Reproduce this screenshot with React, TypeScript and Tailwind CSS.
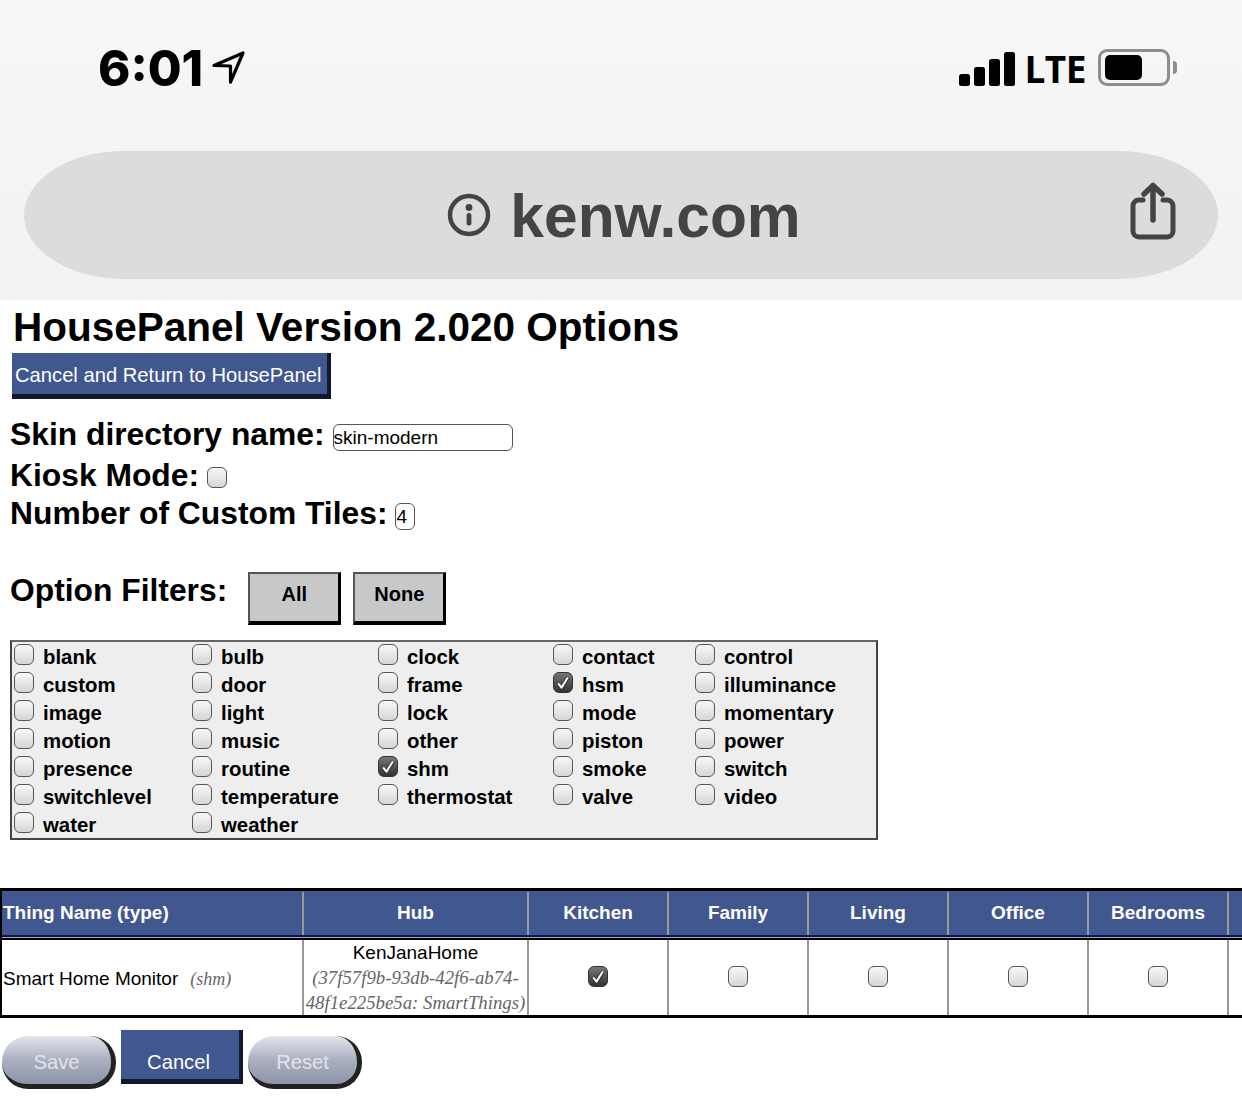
import React from "react";

const sans = "font-['Liberation_Sans',Arial,sans-serif]";

function Box({ checked = false }: { checked?: boolean }) {
  if (checked) {
    return (
      <span className="relative flex h-[21px] w-[20px] shrink-0 items-center justify-center rounded-[6px] border border-[#333] bg-gradient-to-b from-[#777] to-[#333]">
        <svg width="16" height="16" viewBox="0 0 16 16" fill="none">
          <path d="M3 8.5 6.5 13 13 2.5" stroke="#333" strokeWidth="4" strokeLinejoin="round" />
          <path d="M3.2 8.5 6.5 12.6 12.8 2.5" stroke="#fff" strokeWidth="2" strokeLinejoin="round" />
        </svg>
      </span>
    );
  }
  return <span className="block h-[21px] w-[20px] shrink-0 rounded-[6px] border border-[#555] bg-gradient-to-b from-[#f8f8f8] to-[#d6d6d6]" />;
}

const filterCols: { x: string; items: [string, boolean?][] }[] = [
  { x: "w-[178px]", items: [["blank"], ["custom"], ["image"], ["motion"], ["presence"], ["switchlevel"], ["water"]] },
  { x: "w-[186px]", items: [["bulb"], ["door"], ["light"], ["music"], ["routine"], ["temperature"], ["weather"]] },
  { x: "w-[175px]", items: [["clock"], ["frame"], ["lock"], ["other"], ["shm", true], ["thermostat"]] },
  { x: "w-[142px]", items: [["contact"], ["hsm", true], ["mode"], ["piston"], ["smoke"], ["valve"]] },
  { x: "w-[170px]", items: [["control"], ["illuminance"], ["momentary"], ["power"], ["switch"], ["video"]] },
];

const roomCols = [
  { name: "Kitchen", w: "w-[140px]", checked: true },
  { name: "Family", w: "w-[140px]" },
  { name: "Living", w: "w-[140px]" },
  { name: "Office", w: "w-[140px]" },
  { name: "Bedrooms", w: "w-[140px]" },
];

function StatusBar() {
  return (
    <div className="flex h-[151px] items-start justify-between pl-[98px] pr-[65px] pt-[41px]">
      <div className="flex items-center">
        <span className="font-['Inter',sans-serif] text-[49px] font-extrabold leading-[56px] text-black">6:01</span>
        <svg className="ml-[8px] mt-[-3px]" width="36" height="36" viewBox="0 0 36 36" fill="none">
          <path d="M3 15.5 32 3 19.5 32V16Z" stroke="#000" strokeWidth="3.2" strokeLinejoin="round" />
        </svg>
      </div>
      <div className="flex items-center pt-[7px]">
        <svg width="56" height="36" viewBox="0 0 56 36" fill="#000">
          <rect x="0" y="23" width="11" height="12" rx="2.5" />
          <rect x="15" y="16" width="11" height="19" rx="2.5" />
          <rect x="30" y="8" width="11" height="27" rx="2.5" />
          <rect x="45" y="1" width="11" height="34" rx="2.5" />
        </svg>
        <span className="ml-[9px] mt-[1px] font-['Open_Sans',sans-serif] text-[37px] font-bold leading-[40px] tracking-[-0.5px] text-black">LTE</span>
        <span className="ml-[12px] mt-[-3px] flex h-[37px] w-[72px] items-center rounded-[9px] border-[3px] border-[#8e8e8e] pl-[4px]">
          <span className="block h-[25px] w-[37px] rounded-[5px] bg-black" />
        </span>
        <span className="ml-[3px] mt-[-3px] block h-[13px] w-[4px] rounded-r-[4px] bg-[#8e8e8e]" />
      </div>
    </div>
  );
}

function UrlPill() {
  return (
    <div className="relative mx-[24px] flex h-[128px] items-center justify-center rounded-[100px/64px] bg-[#dcdcdc] pl-[6px]">
      <svg className="mr-[19px] mt-[-1px]" width="44" height="44" viewBox="0 0 44 44" fill="none">
        <circle cx="22" cy="22" r="19" stroke="#444" strokeWidth="4.5" />
        <circle cx="22" cy="14.5" r="3.4" fill="#444" />
        <rect x="19.6" y="20" width="4.8" height="12.5" rx="2.2" fill="#444" />
      </svg>
      <span className={`${sans} mt-[2px] text-[60.5px] font-bold leading-[72px] text-[#444]`}>kenw.com</span>
      <svg className="absolute right-[42px] top-[31px]" width="46" height="58" viewBox="0 0 46 58" fill="none">
        <path d="M13 18H9a6 6 0 0 0-6 6v25a6 6 0 0 0 6 6h28a6 6 0 0 0 6-6V24a6 6 0 0 0-6-6h-4" stroke="#444" strokeWidth="5" strokeLinecap="round" />
        <path d="M23 38V4" stroke="#444" strokeWidth="5.5" strokeLinecap="round" />
        <path d="M14 12 23 3.5 32 12" stroke="#444" strokeWidth="5.5" strokeLinecap="round" strokeLinejoin="round" />
      </svg>
    </div>
  );
}

function PillButton({ label }: { label: string }) {
  return (
    <span className="flex h-[53px] w-[114px] items-center justify-center rounded-[26px] border-b-[5px] border-r-[5px] border-[#222] bg-gradient-to-b from-[#e4e6ec] via-[#aab0c0] to-[#8d94a8] pt-[4px] text-[20.2px] leading-none text-[#e2e4ea]">
      {label}
    </span>
  );
}

export default function App() {
  return (
    <div className={`${sans} h-[1110px] w-[1242px] overflow-hidden bg-white text-black`}>
      <div className="h-[300px] bg-gradient-to-b from-[#f7f7f7] to-[#f2f2f2]">
        <StatusBar />
        <UrlPill />
      </div>

      <h1 className="ml-[13px] whitespace-nowrap text-[40.5px] font-bold leading-[54px]">HousePanel Version 2.020 Options</h1>

      <div className="ml-[12px] mt-[-1px] flex h-[46px] w-[319px] items-center whitespace-nowrap border-b-[5px] border-r-[4px] border-[#14182c] bg-[#41578f] pl-[3px] pt-[4px] text-[20.2px] text-white">
        Cancel and Return to HousePanel
      </div>

      <div className="ml-[10px] mt-[15px] flex h-[40px] items-center">
        <span className="text-[31.8px] font-bold leading-[40px]">Skin directory name:</span>
        <span className="ml-[8px] mt-[6px] flex h-[27px] w-[180px] items-center rounded-[6px] border border-[#555] pt-[3px] text-[19px]">skin-modern</span>
      </div>
      <div className="ml-[10px] flex h-[42px] items-center">
        <span className="text-[31.8px] font-bold leading-[40px]">Kiosk Mode:</span>
        <span className="ml-[8px] mt-[4px]"><Box /></span>
      </div>
      <div className="ml-[10px] flex h-[36px] items-center">
        <span className="mt-[-2px] text-[31.8px] font-bold leading-[36px]">Number of Custom Tiles:</span>
        <span className="ml-[8px] mt-[4px] flex h-[27px] w-[20px] items-center rounded-[6px] border border-[#555] pt-[2px] text-[19px]">4</span>
      </div>

      <div className="ml-[10px] mt-[40px] flex h-[53px] items-start">
        <span className="mt-[-2px] text-[31.8px] font-bold leading-[40px]">Option Filters:</span>
        <span className="ml-[21px] flex h-[53px] w-[93px] items-center justify-center border-2 border-b-[4px] border-r-[3px] border-[#555] border-b-black border-r-black bg-[#c8c8c8] pb-[8px] text-[20px] font-bold">All</span>
        <span className="ml-[12px] flex h-[53px] w-[93px] items-center justify-center border-2 border-b-[4px] border-r-[3px] border-[#555] border-b-black border-r-black bg-[#c8c8c8] pb-[8px] text-[20px] font-bold">None</span>
      </div>

      <div className="ml-[10px] mt-[15px] flex h-[200px] w-[868px] border-2 border-[#444] border-t-[#666] bg-[#eeeeee] pl-[2px] pt-[2px]">
        {filterCols.map((col) => (
          <div key={col.items[0][0]} className={`${col.x} flex flex-col`}>
            {col.items.map(([label, checked]) => (
              <div key={label} className="flex h-[28px] shrink-0 items-start">
                <Box checked={checked} />
                <span className="ml-[9px] text-[20.4px] font-bold leading-[26px]">{label}</span>
              </div>
            ))}
          </div>
        ))}
      </div>

      <div className="mt-[48px] border-b-[3px] border-l-2 border-t-[3px] border-black">
        <div className="flex h-[46px] border-b-[2px] border-[#0a1560] bg-[#41578f] pt-[1px] text-[19px] font-bold text-white">
          <div className="flex w-[302px] shrink-0 items-center border-r-2 border-[#999] pl-[1px]">Thing Name (type)</div>
          <div className="flex w-[225px] shrink-0 items-center justify-center border-r-2 border-[#999]">Hub</div>
          {roomCols.map((c) => (
            <div key={c.name} className={`${c.w} flex shrink-0 items-center justify-center border-r-2 border-[#999]`}>{c.name}</div>
          ))}
        </div>
        <div className="h-[3px] border-b-[2px] border-black bg-[#aaa]" />
        <div className="flex h-[75px]">
          <div className="flex w-[302px] shrink-0 items-center border-r-2 border-[#999] pl-[1px] pt-[3px] text-[19px]">
            Smart Home Monitor
            <span className="ml-[12px] font-['Liberation_Serif',serif] text-[18px] italic text-[#666]">(shm)</span>
          </div>
          <div className="flex w-[225px] shrink-0 flex-col items-center justify-center border-r-2 border-[#999] text-center">
            <span className="text-[19px] leading-[25px]">KenJanaHome</span>
            <span className="whitespace-nowrap font-['Liberation_Serif',serif] text-[18.8px] italic leading-[25px] text-[#666]">(37f57f9b-93db-42f6-ab74-</span>
            <span className="whitespace-nowrap font-['Liberation_Serif',serif] text-[18.8px] italic leading-[25px] text-[#666]">48f1e225be5a: SmartThings)</span>
          </div>
          {roomCols.map((c) => (
            <div key={c.name} className={`${c.w} flex shrink-0 items-center justify-center border-r-2 border-[#999]`}>
              <span className="mt-[-2px]"><Box checked={c.checked} /></span>
            </div>
          ))}
        </div>
      </div>

      <div className="ml-[2px] mt-[12px] flex items-start">
        <span className="mt-[6px]"><PillButton label="Save" /></span>
        <span className="ml-[5px] flex h-[54px] w-[122px] items-center justify-center border-b-[5px] border-r-[4px] border-[#14182c] bg-[#41578f] pr-[3px] pt-[16px] text-[20.2px] text-white">Cancel</span>
        <span className="ml-[5px] mt-[6px]"><PillButton label="Reset" /></span>
      </div>
    </div>
  );
}
